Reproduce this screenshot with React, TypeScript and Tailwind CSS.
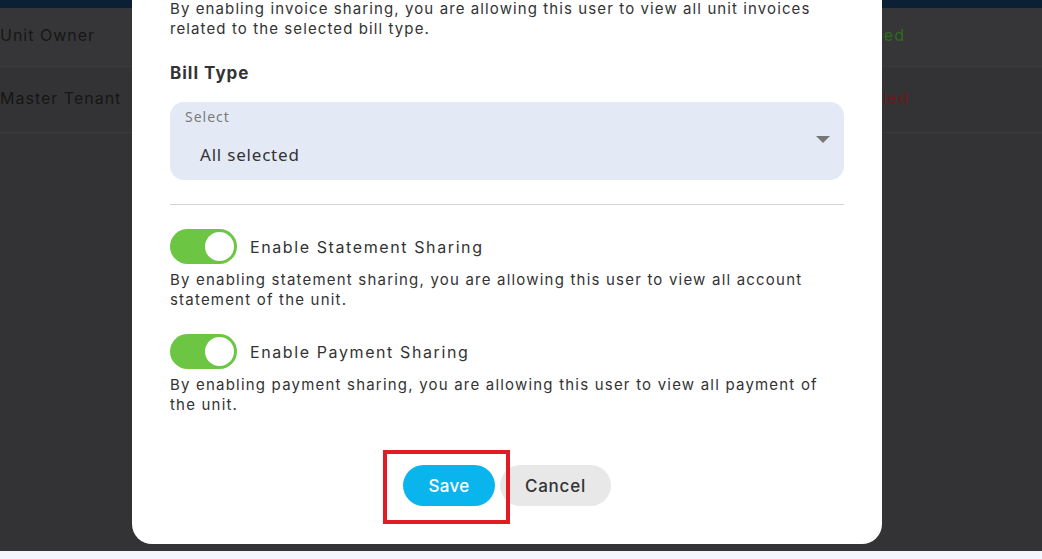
import React from "react";

const mont = { fontFamily: "Inter, 'Open Sans', sans-serif" };

function Toggle() {
  return (
    <div className="flex h-[35px] w-[67px] shrink-0 items-center justify-end rounded-full bg-[#6cc644] pr-[3px]">
      <div className="h-[29px] w-[29px] rounded-full bg-white" />
    </div>
  );
}

export default function App() {
  return (
    <div
      className="relative h-[559px] w-full overflow-hidden bg-[#333335]"
      style={mont}
    >
      <div className="h-[8px] bg-[#0b1f35]" />
      <div className="flex h-[59px] items-center justify-between border-b border-[#3c3c3e] bg-[#363638] pb-[4px] text-[16px] tracking-[1px] text-[#161616]">
        <span>Unit Owner</span>
        <span className="mr-[137px] text-[#2d6b1f]">Enabled</span>
      </div>
      <div className="flex h-[66px] items-center justify-between border-b border-[#3c3c3e] pb-[4px] text-[16px] tracking-[1px] text-[#161616]">
        <span>Master Tenant</span>
        <span className="mr-[133px] text-[#6a1a1c]">Disabled</span>
      </div>
      <div className="absolute bottom-0 left-0 h-[8px] w-full bg-[#f3f6fd]" />

      <div className="absolute left-[132px] top-[-1px] flex h-[545px] w-[750px] flex-col rounded-b-[20px] bg-white px-[38px] text-[#333]">
        <p className="text-[15px] leading-[20px] tracking-[1.1px]">
          By enabling invoice sharing, you are allowing this user to view all unit invoices
          <br />
          related to the selected bill type.
        </p>
        <div className="mt-[22px] text-[17px] font-bold leading-[24px] tracking-[1px]">Bill Type</div>
        <div className="relative mt-[17px] h-[78px] rounded-[14px] bg-[#e4eaf5]">
          <div
            className="pl-[15px] pt-[6px] text-[14px] leading-[18px] tracking-[1px] text-[#7a7a7a]"
            style={{ fontFamily: "'Noto Sans', sans-serif" }}
          >
            Select
          </div>
          <div
            className="mt-[17px] pl-[30px] text-[17px] leading-[24px] tracking-[0.8px] text-[#333]"
            style={{ fontFamily: "'Noto Sans', sans-serif" }}
          >
            All selected
          </div>
          <svg
            className="absolute right-[14px] top-[34px]"
            width="14"
            height="8"
            viewBox="0 0 14 8"
          >
            <path d="M0 0 L14 0 L7 7 Z" fill="#777" />
          </svg>
        </div>
        <div className="mt-[24px] h-px bg-[#d4d4d4]" />
        <div className="mt-[24px] flex items-center gap-[13px]">
          <Toggle />
          <span className="text-[16px] tracking-[1.6px]">Enable Statement Sharing</span>
        </div>
        <p className="mt-[6px] text-[15px] leading-[20px] tracking-[1.2px]">
          By enabling statement sharing, you are allowing this user to view all account
          <br />
          statement of the unit.
        </p>
        <div className="mt-[24px] flex items-center gap-[13px]">
          <Toggle />
          <span className="text-[16px] tracking-[1.6px]">Enable Payment Sharing</span>
        </div>
        <p className="mt-[6px] text-[15px] leading-[20px] tracking-[1.2px]">
          By enabling payment sharing, you are allowing this user to view all payment of
          <br />
          the unit.
        </p>
        <div className="mt-[50px] flex justify-center gap-[5px]">
          <div className="relative">
            <button className="h-[41px] w-[92px] rounded-full bg-[#0ab4ec] pt-[3px] text-[17px] font-medium tracking-[0.3px] text-white">
              Save
            </button>
            <div className="absolute left-[-20px] top-[-15px] h-[74px] w-[127px] border-[4px] border-[#e31b23]" />
          </div>
          <button className="h-[41px] w-[111px] rounded-full bg-[#e8e8e8] pt-[3px] text-[17px] font-medium tracking-[0.8px] text-[#333]">
            Cancel
          </button>
        </div>
      </div>
    </div>
  );
}
